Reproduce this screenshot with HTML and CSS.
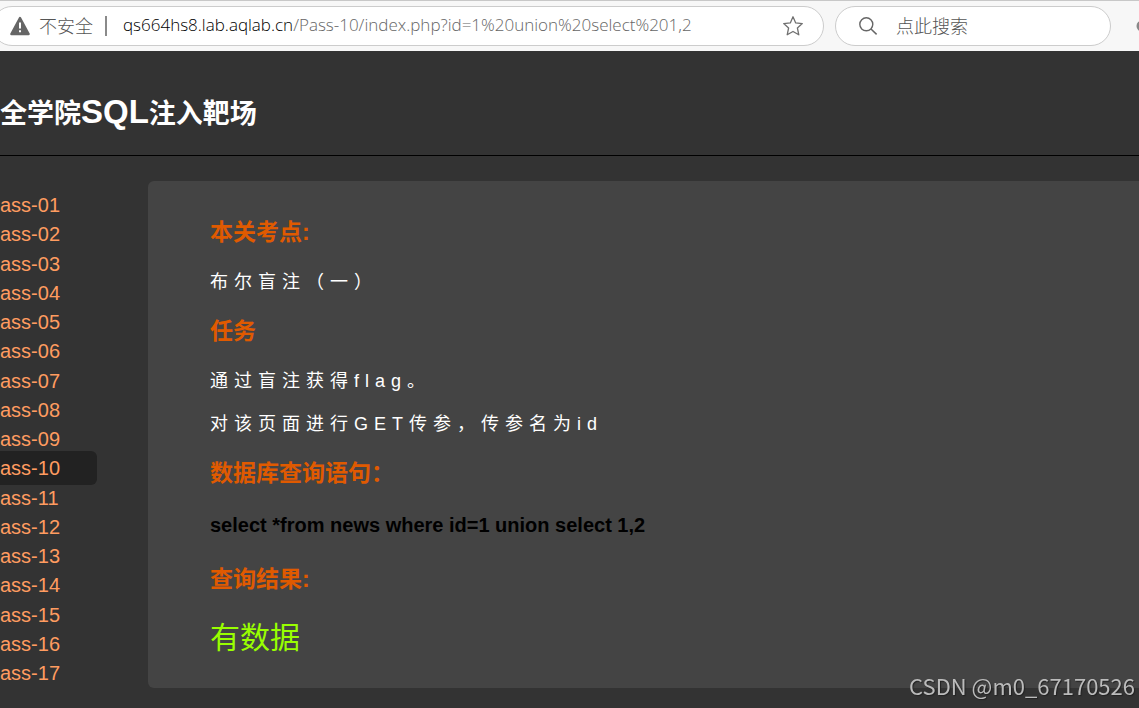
FILE: index.html
```html
<!DOCTYPE html>
<html lang="zh-CN">
<head>
<meta charset="utf-8">
<title>SQL注入靶场</title>
<link rel="stylesheet" href="styles.css">
</head>
<body>
<header class="toolbar">
  <div class="address">
    <svg class="warn" viewBox="0 0 20 20" aria-hidden="true"><path d="M10 2 18.6 18H1.4Z" fill="#666" stroke="#666" stroke-width="2.4" stroke-linejoin="round"/><path d="M10 6.5v6M10 14.2v2" stroke="#fff" stroke-width="2"/></svg>
    <span class="security">不安全</span>
    <span class="divider"></span>
    <span class="url"><span class="host">qs664hs8.lab.aqlab.cn</span>/Pass-10/index.php?id=1%20union%20select%201,2</span>
    <button class="star" type="button" aria-label="收藏"><svg viewBox="0 0 22 22" aria-hidden="true"><path d="M11 1.8 13.7 7.9 20.3 8.6 15.4 13 16.8 19.8 11 16.5 5.2 19.8 6.6 13 1.7 8.6 8.3 7.9Z" fill="none" stroke="#707070" stroke-width="1.3" stroke-linejoin="round"/></svg></button>
  </div>
  <label class="search">
    <svg class="lens" viewBox="0 0 20 20" aria-hidden="true"><circle cx="8.3" cy="8.3" r="6.5" fill="none" stroke="#666" stroke-width="1.4"/><path d="M13 13 18.6 18.4" stroke="#666" stroke-width="1.5"/></svg>
    <input type="text" placeholder="点此搜索" aria-label="点此搜索">
  </label>
  <svg class="more" viewBox="0 0 3 12" aria-hidden="true"><circle cx="6" cy="6" r="5.5" fill="#888"/></svg>
</header>
<div class="banner"><h1>全学院<span class="latin">SQL</span>注入靶场</h1></div>
<div class="layout">
  <nav class="levels">
    <a href="#1">ass-01</a>
    <a href="#2">ass-02</a>
    <a href="#3">ass-03</a>
    <a href="#4">ass-04</a>
    <a href="#5">ass-05</a>
    <a href="#6">ass-06</a>
    <a href="#7">ass-07</a>
    <a href="#8">ass-08</a>
    <a href="#9">ass-09</a>
    <a href="#10" class="active">ass-10</a>
    <a href="#11">ass-11</a>
    <a href="#12">ass-12</a>
    <a href="#13">ass-13</a>
    <a href="#14">ass-14</a>
    <a href="#15">ass-15</a>
    <a href="#16">ass-16</a>
    <a href="#17">ass-17</a>
  </nav>
  <main class="panel">
    <h2>本关考点:</h2>
    <p>布尔盲注（一）</p>
    <h2>任务</h2>
    <p>通过盲注获得flag。</p>
    <p>对该页面进行GET传参，传参名为id</p>
    <h2>数据库查询语句：</h2>
    <p class="query">select *from news where id=1 union select 1,2</p>
    <h2>查询结果:</h2>
    <p class="result">有数据</p>
  </main>
</div>
<div class="watermark">CSDN @m0_67170526</div>
</body>
</html>
```
FILE: styles.css
```css
* { box-sizing: border-box; }
body {
  margin: 0;
  min-height: 100vh;
  background: #333;
  color: #fff;
  font-family: "Liberation Sans", "Noto Sans CJK SC", sans-serif;
}
.toolbar {
  display: flex;
  align-items: center;
  gap: 11px;
  height: 51px;
  border-top: 1px solid #c8c8c8;
  background: #f7f7f7;
  color: #666;
  font-family: "Noto Sans CJK SC", sans-serif;
  font-size: 18px;
  overflow: hidden;
}
.address, .search {
  display: flex;
  align-items: center;
  height: 40px;
  background: #fff;
  border: 1px solid #ccc;
  border-radius: 20px;
}
.address {
  flex: 1;
  margin-left: -8px;
  padding: 0 19px 0 17px;
}
.warn { width: 20px; height: 20px; }
.security {
  margin-left: 9px;
  padding-bottom: 2px;
  line-height: 36px;
  font-weight: 300;
  color: #555;
}
.divider {
  width: 2px;
  height: 20px;
  margin: 0 16px 0 12px;
  background: #8a8a8a;
}
.url {
  flex: 1;
  padding-bottom: 2px;
  font-family: "Open Sans", sans-serif;
  font-size: 17px;
  font-weight: 300;
  line-height: 36px;
  white-space: nowrap;
}
.host { color: #000; }
.star {
  width: 22px;
  height: 22px;
  padding: 0;
  border: 0;
  background: none;
}
.star svg { display: block; }
.search { width: 276px; padding: 0 20px 0 22px; }
.lens { flex: none; width: 20px; height: 20px; }
.search input {
  flex: 1;
  min-width: 0;
  margin-left: 18px;
  padding: 0 0 2px;
  border: 0;
  outline: 0;
  background: none;
  font-family: "Noto Sans CJK SC", sans-serif;
  font-size: 18px;
  font-weight: 300;
}
.search input::placeholder { color: #555; opacity: 1; }
.more { width: 3px; height: 12px; margin-left: 14px; }
.banner {
  display: flex;
  align-items: center;
  height: 105px;
  padding-top: 20px;
  border-bottom: 1px solid #000;
}
h1 { margin: 0; font-size: 27px; line-height: 40px; font-weight: 700; }
.latin { font-size: 33px; }
.layout {
  display: grid;
  grid-template-columns: 97px 1fr;
  column-gap: 51px;
  padding-top: 25px;
}
.levels {
  display: flex;
  flex-direction: column;
  justify-content: space-between;
  padding: 10px 0 1px;
}
.levels a {
  margin: -3px 0;
  padding: 3px 0;
  border-radius: 0 6px 6px 0;
  color: #ff9c60;
  font-size: 20px;
  line-height: 28px;
  text-decoration: none;
}
.levels .active { background: #222; }
.panel {
  padding: 35px 20px 29px 62px;
  border-radius: 6px 0 0 6px;
  background: #444;
}
h2, p { margin: 0; }
h2 {
  margin-bottom: 22px;
  color: #e05a00;
  font-size: 23px;
  line-height: 32px;
  font-weight: 700;
}
p {
  margin-bottom: 19px;
  font-size: 18px;
  line-height: 24px;
  letter-spacing: 6px;
}
p + h2 { margin-top: 21px; }
.query {
  color: #000;
  font-size: 20px;
  line-height: 28px;
  font-weight: 700;
  letter-spacing: normal;
}
.query + h2 { margin-top: 24px; }
.result {
  margin: 0;
  color: #9f0;
  font-size: 30px;
  line-height: 42px;
  letter-spacing: normal;
}
.watermark {
  position: fixed;
  right: 4px;
  bottom: 6px;
  color: #bbb;
  font-family: "Noto Sans CJK SC", sans-serif;
  font-size: 22px;
  line-height: 34px;
  text-shadow: 1px 1px 1px #222;
}
```
